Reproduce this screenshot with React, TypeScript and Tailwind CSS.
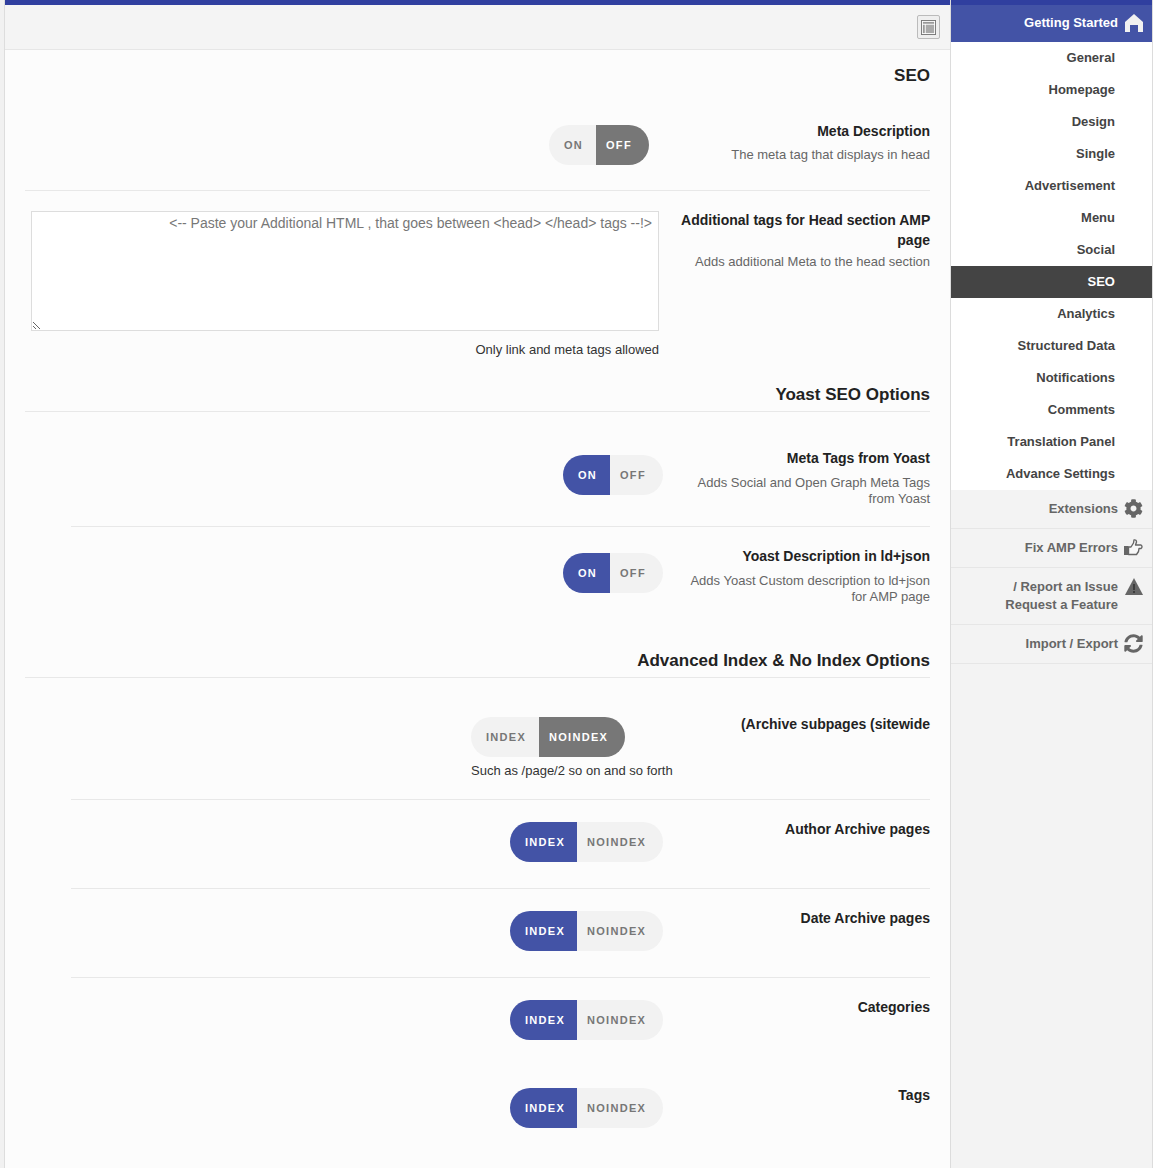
import { FaCog, FaSyncAlt } from "react-icons/fa";

const NAV_ITEMS = [
    "General",
    "Homepage",
    "Design",
    "Single",
    "Advertisement",
    "Menu",
    "Social",
    "SEO",
    "Analytics",
    "Structured Data",
    "Notifications",
    "Comments",
    "Translation Panel",
    "Advance Settings",
];

function Toggle({
    left,
    right,
    active,
    leftWidth,
    rightWidth,
}: {
    left: string;
    right: string;
    active: "left" | "right";
    leftWidth: string;
    rightWidth: string;
}) {
    const base = "flex h-10 items-center justify-start text-[11px] font-bold tracking-[1.3px]";
    return (
        <div dir="ltr" className="flex h-10 w-fit overflow-hidden rounded-full">
            <span
                className={`${base} ${leftWidth} pl-[15px] ${active == "left" ? "bg-[#4353a6] text-white" : "bg-[#f2f2f2] text-[#777]"}`}
            >
                {left}
            </span>
            <span
                className={`${base} ${rightWidth} pl-[10px] ${active == "right" ? "bg-[#777777] text-white" : "bg-[#f2f2f2] text-[#777]"}`}
            >
                {right}
            </span>
        </div>
    );
}

function OnOff({ active }: { active: "left" | "right" }) {
    return <Toggle left="ON" right="OFF" active={active} leftWidth="w-[47px]" rightWidth="w-[53px]" />;
}

function IndexToggle({ active }: { active: "left" | "right" }) {
    return (
        <Toggle
            left="INDEX"
            right="NOINDEX"
            active={active}
            leftWidth={active == "right" ? "w-[68px]" : "w-[67px]"}
            rightWidth="w-[86px]"
        />
    );
}

function Label({ title, desc, descGap = "mt-[7px]", className = "" }: { title: string; desc?: string; descGap?: string; className?: string }) {
    return (
        <div className={`w-[250px] shrink-0 ${className}`}>
            <h3 className="text-[14px] leading-[20px] font-bold text-[#222]">{title}</h3>
            {desc && <p className={`text-[13px] leading-[16px] text-[#666] ${descGap}`}>{desc}</p>}
        </div>
    );
}

function SectionTitle({ children }: { children: string }) {
    return (
        <h2 className="mx-5 h-[28px] border-b border-[#e8e8e8] pt-px text-[17px] leading-[20px] font-bold text-[#222]">
            {children}
        </h2>
    );
}

function SideLink({ children, icon, multi }: { children: React.ReactNode; icon: React.ReactNode; multi?: boolean }) {
    return (
        <div
            className={`flex border-b border-[#e6e6e6] pr-[9px] pl-2 text-[13px] font-bold text-[#666] ${multi ? "h-[57px] pt-[10px] leading-[18px]" : "h-[39px] items-center"}`}
        >
            <span className="-mt-[2px] flex h-[20px] w-[19px] shrink-0 items-center justify-center text-[19px] text-[#666]">
                {icon}
            </span>
            <span className="mr-[6px]">{children}</span>
        </div>
    );
}

function HomeIcon() {
    return (
        <svg viewBox="0 0 18 18" className="ml-[9px] h-[18px] w-[18px] shrink-0">
            <path d="M9 0 L18 8 V18 H13 V11 H5 V18 H0 V8 Z" fill="#f1f1f1" strokeLinejoin="round" />
        </svg>
    );
}

function ThumbIcon() {
    return (
        <svg viewBox="0 0 19 17" className="h-[17px] w-[19px]">
            <rect x="0" y="7" width="4.5" height="9" fill="#666" />
            <path
                d="M4.5 8 L7 8 L9.5 4 L10 1 Q12.5 0.5 12.5 3 L11.5 6 L17 6 Q19 7.5 17 9.5 L15 9.5 L14.5 12.5 L12.5 15.5 L4.5 15.5 Z"
                fill="#f8f8f8"
                stroke="#666"
                strokeWidth="1.4"
                strokeLinejoin="round"
            />
        </svg>
    );
}

function WarningIcon() {
    return (
        <svg viewBox="0 0 18 17" className="h-[17px] w-[18px]">
            <path d="M9 0 L18 17 H0 Z" fill="#666" />
            <rect x="8.2" y="6" width="1.6" height="6" fill="#333" />
            <rect x="8.2" y="13" width="1.6" height="2" fill="#333" />
        </svg>
    );
}

export default function App() {
    return (
        <div
            dir="rtl"
            className="flex h-[1168px] w-[1154px] overflow-hidden bg-white font-['Liberation_Sans',Arial,sans-serif]"
        >
            <aside className="mr-px flex w-[203px] shrink-0 flex-col border-x border-x-[#dcdcdc] bg-[#f3f3f3]">
                <div className="h-[5px] bg-[#303f9f]" />
                <div className="flex h-[37px] items-center bg-[#4353a6] pr-[9px] pb-[1px] pl-2 text-[13px] font-bold text-white">
                    <HomeIcon />
                    <span className="mr-[-2px]">Getting Started</span>
                </div>
                <nav className="bg-white">
                    {NAV_ITEMS.map((item) => (
                        <div
                            key={item}
                            className={`flex h-8 items-center pr-[37px] text-[13px] font-bold ${item == "SEO" ? "bg-[#444444] text-white" : "text-[#444]"}`}
                        >
                            {item}
                        </div>
                    ))}
                </nav>
                <SideLink icon={<FaCog />}>Extensions</SideLink>
                <SideLink icon={<ThumbIcon />}>Fix AMP Errors</SideLink>
                <SideLink icon={<WarningIcon />} multi>
                    Report an Issue /<br />
                    Request a Feature
                </SideLink>
                <SideLink icon={<FaSyncAlt />}>Import / Export</SideLink>
            </aside>

            <main className="min-w-0 flex-1 border-l border-l-[#dddddd] bg-[#fcfcfc]">
                <div className="h-[5px] bg-[#303f9f]" />
                <header className="flex h-[45px] items-start border-b border-[#e6e6e6] bg-[#f4f4f4] pt-[10px]">
                    <div className="mr-[10px] flex h-[24px] w-[23px] items-center justify-center rounded-[2px] border border-[#bbb] bg-[#efefef]">
                        <svg viewBox="0 0 16 16" className="h-[15px] w-[15px]">
                            <rect x="0.5" y="0.5" width="15" height="15" fill="#fff" stroke="#777" />
                            <rect x="2" y="2" width="12" height="2" fill="#999" />
                            <rect x="2" y="5" width="2" height="9" fill="#999" />
                            <rect x="5" y="5" width="9" height="9" fill="#aaa" />
                        </svg>
                    </div>
                </header>

                <h2 className="mt-[16px] mr-5 text-[17px] leading-[20px] font-bold text-[#222]">SEO</h2>

                <div className="mx-5 flex h-[105px] items-start border-b border-[#e8e8e8] pt-[35px]">
                    <Label title="Meta Description" desc="The meta tag that displays in head" descGap="mt-[6px]" />
                    <div className="mt-[4px] mr-[31px]">
                        <OnOff active="right" />
                    </div>
                </div>

                <div className="mx-5 flex h-[193px] items-start pt-[20px]">
                    <Label
                        title="Additional tags for Head section AMP page"
                        desc="Adds additional Meta to the head section"
                        descGap="mt-[4px]"
                        className="-mt-px"
                    />
                    <div className="mr-[21px]">
                        <textarea
                            placeholder="<!-- Paste your Additional HTML , that goes between <head> </head> tags -->"
                            className="block h-[120px] w-[628px] border border-[#ddd] bg-white px-[6px] py-[1px] text-[14px] leading-[20px] placeholder:text-[#777] focus:outline-none"
                        />
                        <p className="mt-[10px] text-[13px] leading-[18px] text-[#333]">Only link and meta tags allowed</p>
                    </div>
                </div>

                <SectionTitle>Yoast SEO Options</SectionTitle>

                <div className="mr-5 ml-[66px] flex h-[115px] items-start border-b border-[#e8e8e8] pt-[36px]">
                    <Label title="Meta Tags from Yoast" desc="Adds Social and Open Graph Meta Tags from Yoast" />
                    <div className="mt-[7px] mr-[17px]">
                        <OnOff active="left" />
                    </div>
                </div>

                <div className="mr-5 ml-[66px] flex h-[123px] items-start pt-[19px]">
                    <Label title="Yoast Description in ld+json" desc="Adds Yoast Custom description to ld+json for AMP page" />
                    <div className="mt-[7px] mr-[17px]">
                        <OnOff active="left" />
                    </div>
                </div>

                <SectionTitle>Advanced Index & No Index Options</SectionTitle>

                <div className="mr-5 ml-[66px] flex h-[122px] items-start border-b border-[#e8e8e8] pt-[36px]">
                    <div className="w-[250px] shrink-0">
                        <h3 dir="ltr" className="text-right text-[14px] leading-[20px] font-bold text-[#222]">
                            (Archive subpages (sitewide
                        </h3>
                    </div>
                    <div className="mt-[3px] mr-[7px] flex w-[202px] flex-col items-end">
                        <IndexToggle active="right" />
                        <p className="mt-[5px] text-[13px] leading-[18px] whitespace-nowrap text-[#333]">Such as /page/2 so on and so forth</p>
                    </div>
                </div>

                <div className="mr-5 ml-[66px] flex h-[89px] items-start border-b border-[#e8e8e8] pt-[19px]">
                    <Label title="Author Archive pages" />
                    <div className="mt-[3px] mr-[17px]">
                        <IndexToggle active="left" />
                    </div>
                </div>

                <div className="mr-5 ml-[66px] flex h-[89px] items-start border-b border-[#e8e8e8] pt-[19px]">
                    <Label title="Date Archive pages" />
                    <div className="mt-[3px] mr-[17px]">
                        <IndexToggle active="left" />
                    </div>
                </div>

                <div className="mr-5 ml-[66px] flex h-[88px] items-start pt-[19px]">
                    <Label title="Categories" />
                    <div className="mt-[3px] mr-[17px]">
                        <IndexToggle active="left" />
                    </div>
                </div>

                <div className="mr-5 ml-[66px] flex items-start pt-[19px]">
                    <Label title="Tags" />
                    <div className="mt-[3px] mr-[17px]">
                        <IndexToggle active="left" />
                    </div>
                </div>
            </main>
            <div className="w-1 shrink-0 bg-[#f1f1f1]" />
        </div>
    );
}
